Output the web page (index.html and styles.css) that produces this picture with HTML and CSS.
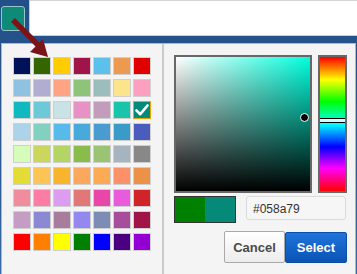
FILE: index.html
```html
<!DOCTYPE html>
<html>
<head>
<meta charset="utf-8">
<link rel="stylesheet" href="styles.css">
</head>
<body>
<div class="top">
  <div class="swatch-btn"></div>
  <div class="top-input"></div>
</div>
<div class="panel">
  <div class="palette">
    <div class="grid">
      <span class="sw" style="background:#00135a"></span>
      <span class="sw" style="background:#336600"></span>
      <span class="sw" style="background:#ffcc00"></span>
      <span class="sw" style="background:#a0144a"></span>
      <span class="sw" style="background:#5bc0eb"></span>
      <span class="sw" style="background:#ec9a50"></span>
      <span class="sw" style="background:#e00000"></span>

      <span class="sw" style="background:#8fc1e0"></span>
      <span class="sw" style="background:#b0aed0"></span>
      <span class="sw" style="background:#ffa385"></span>
      <span class="sw" style="background:#8ec47a"></span>
      <span class="sw" style="background:#9bbdbb"></span>
      <span class="sw" style="background:#fce48c"></span>
      <span class="sw" style="background:#fca0c0"></span>

      <span class="sw" style="background:#10b8c0"></span>
      <span class="sw" style="background:#6ccad8"></span>
      <span class="sw" style="background:#c8e2e6"></span>
      <span class="sw" style="background:#e891c4"></span>
      <span class="sw" style="background:#c39bbb"></span>
      <span class="sw" style="background:#1ac4aa"></span>
      <span class="sw selected" style="background:#058a79"><svg class="check" viewBox="0 0 16 16"><path d="M2.5 8.5 L6.3 12.2 L13.5 3.5" fill="none" stroke="#fff" stroke-width="2.6" stroke-linecap="round" stroke-linejoin="round"/></svg></span>

      <span class="sw" style="background:#abd3ea"></span>
      <span class="sw" style="background:#82d1c0"></span>
      <span class="sw" style="background:#58baea"></span>
      <span class="sw" style="background:#48aadc"></span>
      <span class="sw" style="background:#4a9bd0"></span>
      <span class="sw" style="background:#3a9ac8"></span>
      <span class="sw" style="background:#4a5dbd"></span>

      <span class="sw" style="background:#d3fdb8"></span>
      <span class="sw" style="background:#cbd65c"></span>
      <span class="sw" style="background:#b4d464"></span>
      <span class="sw" style="background:#8abc4c"></span>
      <span class="sw" style="background:#98c474"></span>
      <span class="sw" style="background:#a6b4c0"></span>
      <span class="sw" style="background:#888888"></span>

      <span class="sw" style="background:#e3dc34"></span>
      <span class="sw" style="background:#fcc454"></span>
      <span class="sw" style="background:#f8b42c"></span>
      <span class="sw" style="background:#fca85c"></span>
      <span class="sw" style="background:#fcaa54"></span>
      <span class="sw" style="background:#fc9068"></span>
      <span class="sw" style="background:#ec9248"></span>

      <span class="sw" style="background:#f08c9c"></span>
      <span class="sw" style="background:#fc7ca4"></span>
      <span class="sw" style="background:#dc9cf0"></span>
      <span class="sw" style="background:#e07878"></span>
      <span class="sw" style="background:#e846a8"></span>
      <span class="sw" style="background:#e85cdc"></span>
      <span class="sw" style="background:#d02428"></span>

      <span class="sw" style="background:#c49cc4"></span>
      <span class="sw" style="background:#8c88d4"></span>
      <span class="sw" style="background:#a87c9c"></span>
      <span class="sw" style="background:#9488f0"></span>
      <span class="sw" style="background:#7c8cb4"></span>
      <span class="sw" style="background:#a84c9c"></span>
      <span class="sw" style="background:#a01448"></span>

      <span class="sw" style="background:#ff0000"></span>
      <span class="sw" style="background:#ff8000"></span>
      <span class="sw" style="background:#ffff00"></span>
      <span class="sw" style="background:#008000"></span>
      <span class="sw" style="background:#0000ff"></span>
      <span class="sw" style="background:#4b0082"></span>
      <span class="sw" style="background:#9400d3"></span>
    </div>
  </div>
  <div class="divider"></div>
  <div class="picker">
    <div class="pick-row">
      <div class="sv">
        <span class="sv-cursor"></span>
      </div>
      <div class="hue">
        <span class="hue-sel"></span>
      </div>
    </div>
    <div class="value-row">
      <div class="preview">
        <span class="prev-old"></span>
        <span class="prev-new"></span>
      </div>
      <div class="hex">#058a79</div>
    </div>
    <div class="btn-row">
      <button class="btn cancel">Cancel</button>
      <button class="btn select">Select</button>
    </div>
  </div>
</div>
<svg class="arrow" width="60" height="62" viewBox="0 0 60 62">
  <line x1="13" y1="20" x2="39" y2="46" stroke="#7a1418" stroke-width="5.5"/>
  <polygon points="48,57 30,52 43,39" fill="#7a1418"/>
</svg>
</body>
</html>
```
FILE: styles.css
```css
html, body {
  margin: 0;
  padding: 0;
}
body {
  background: linear-gradient(180deg, #234f88 0%, #2d5c96 70%, #3a6aa6 100%);
  font-family: "Liberation Sans", Arial, sans-serif;
  width: 357px;
  height: 274px;
  overflow: hidden;
  position: relative;
}
.top {
  display: flex;
  height: 43px;
  align-items: flex-start;
}
.swatch-btn {
  box-sizing: border-box;
  width: 24px;
  height: 25px;
  margin: 6px 0 0 1px;
  background: #0e8a79;
  border: 1px solid #9cc3c8;
  border-radius: 3px;
}
.top-input {
  flex: 1;
  box-sizing: border-box;
  height: 36px;
  margin-left: 4px;
  background: #fff;
  border-top: 1px solid #d4d4d4;
  border-bottom: 1px solid #c9cfd8;
  border-left: 1px solid #c8ccd4;
}
.panel {
  box-sizing: border-box;
  display: flex;
  margin-left: 1px;
  width: 355px;
  height: 240px;
  background: #f4f4f4;
  border: 1px solid #a8b2f0;
  border-bottom: none;
}
.palette {
  width: 160px;
  box-sizing: border-box;
  padding: 13px 0 0 11px;
}
.grid {
  display: grid;
  grid-template-columns: repeat(7, 18px);
  grid-auto-rows: 18px;
  column-gap: 2px;
  row-gap: 4px;
}
.sw {
  box-sizing: border-box;
  display: block;
  width: 18px;
  height: 18px;
  border: 1px solid #cfcfcf;
}
.sw.selected {
  border: 1px solid #f5a500;
  position: relative;
}
.check {
  display: block;
  width: 16px;
  height: 16px;
}
.divider {
  width: 2px;
  background: #cbcbcb;
}
.picker {
  padding: 11px 0 0 10px;
}
.pick-row {
  display: flex;
}
.sv {
  position: relative;
  box-sizing: border-box;
  width: 138px;
  height: 138px;
  border: 2px solid #676767;
  background:
    linear-gradient(to top, #000 0%, rgba(0,0,0,0) 100%),
    linear-gradient(to right, #fff 0%, #00ffdd 100%);
}
.sv-cursor {
  position: absolute;
  left: 124px;
  top: 56px;
  width: 7px;
  height: 7px;
  border-radius: 50%;
  background: #000;
  border: 1px solid #fff;
}
.hue {
  position: relative;
  box-sizing: border-box;
  margin-left: 6px;
  width: 29px;
  height: 138px;
  border: 2px solid #676767;
  background: linear-gradient(to bottom, #f00 0%, #ff0 17%, #0f0 33%, #0ff 50%, #00f 67%, #f0f 83%, #f00 100%);
}
.hue-sel {
  position: absolute;
  left: 0;
  right: 0;
  top: 61px;
  height: 3px;
  background: #c8ffff;
  border-top: 1px solid #000;
  border-bottom: 1px solid #000;
}
.value-row {
  display: flex;
  margin-top: 3px;
}
.preview {
  display: flex;
  box-sizing: border-box;
  width: 62px;
  height: 27px;
  border: 1px solid #333;
}
.prev-old {
  flex: 1;
  background: #008000;
}
.prev-new {
  flex: 1;
  background: #058a79;
}
.hex {
  box-sizing: border-box;
  margin-left: 10px;
  width: 100px;
  height: 24px;
  padding: 5px 0 0 6px;
  background: #f6f6f6;
  border: 1px solid #dadada;
  border-radius: 3px;
  font-size: 12px;
  color: #333;
}
.btn-row {
  display: flex;
  justify-content: flex-end;
  margin-top: 8px;
  width: 173px;
}
.btn {
  box-sizing: border-box;
  font-family: "Liberation Sans", Arial, sans-serif;
  font-weight: bold;
  font-size: 13px;
  height: 32px;
  padding: 0;
  border-radius: 2px;
  margin: 0;
}
.cancel {
  width: 61px;
  background: linear-gradient(#ffffff, #ececec);
  border: 1px solid #a9a9a9;
  color: #4a4a4a;
}
.select {
  width: 62px;
  height: 31px;
  margin-top: 1px;
  background: linear-gradient(#1f74dc, #0b53b6);
  border: 1px solid #0c4ea6;
  color: #fff;
}
.arrow {
  position: absolute;
  left: 0;
  top: 0;
}
```
